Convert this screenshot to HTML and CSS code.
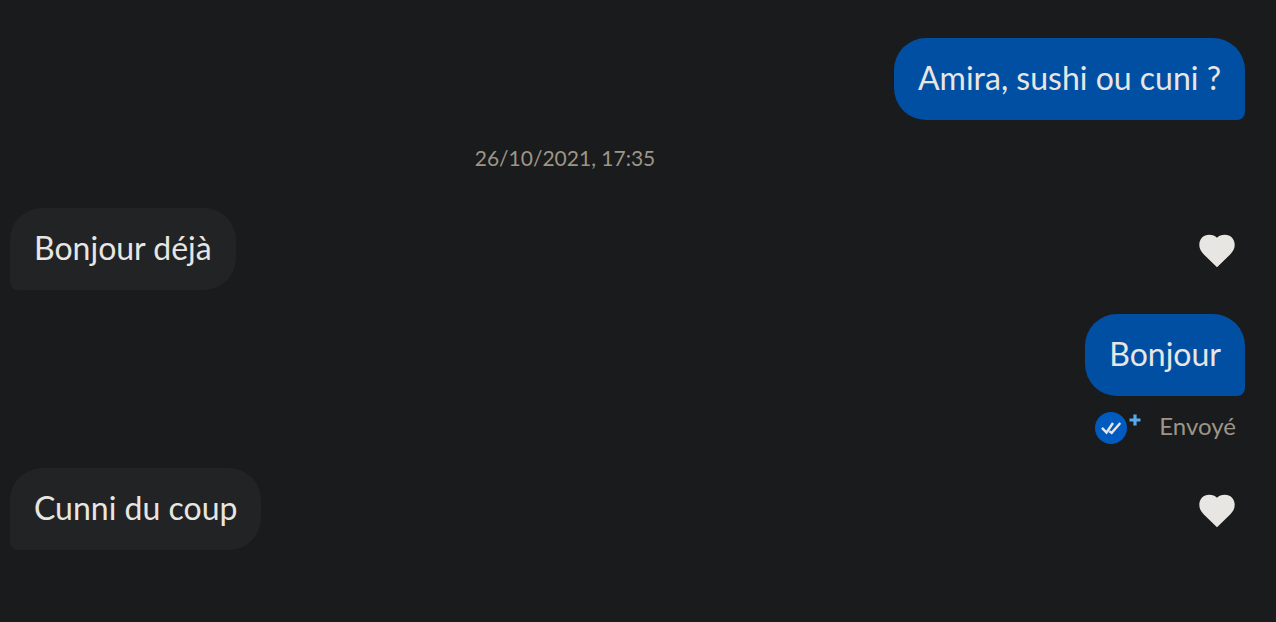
FILE: index.html
```
<!DOCTYPE html>
<html lang="fr">
<head>
<meta charset="utf-8">
<meta name="viewport" content="width=device-width, initial-scale=1">
<title>Conversation</title>
<link rel="stylesheet" href="styles.css">
</head>
<body>
<main class="chat">
  <div class="row row-sent"><p class="bubble sent">Amira, sushi ou cuni ?</p></div>
  <time class="date" datetime="2021-10-26T17:35">26/10/2021, 17:35</time>
  <div class="row">
    <p class="bubble received">Bonjour déjà</p>
    <button class="like" type="button" aria-label="J'aime"><svg class="heart" viewBox="0 0 36 34" aria-hidden="true"><path d="M18 33.200L4.600 20.200C1.500 17 .3 14.200.3 10.800C.3 4.800 4.600.8 10 .8C13.500.8 16.300 1.900 18 3.700C19.700 1.900 22.500.8 26 .8C31.400.8 35.700 4.800 35.700 10.800C35.700 14.200 34.500 17 31.400 20.200Z"/></svg></button>
  </div>
  <div class="row row-sent"><p class="bubble sent">Bonjour</p></div>
  <div class="status">
    <svg class="receipt" viewBox="0 0 48 36" aria-hidden="true"><circle cx="16" cy="20" r="16" fill="#005bc0"/><path d="M7 19.800l4.500 4.700 6.500-9.500M14.300 23.200l2.400 1.700 8.600-9.900" fill="none" stroke="#e8e6e3" stroke-width="2.400"/><path d="M40 6.500v11M34.500 12h11" stroke="#58a9ee" stroke-width="3.200"/></svg>
    <span>Envoyé</span>
  </div>
  <div class="row">
    <p class="bubble received">Cunni du coup</p>
    <button class="like" type="button" aria-label="J'aime"><svg class="heart" viewBox="0 0 36 34" aria-hidden="true"><path d="M18 33.200L4.600 20.200C1.500 17 .3 14.200.3 10.800C.3 4.800 4.600.8 10 .8C13.500.8 16.300 1.900 18 3.700C19.700 1.900 22.500.8 26 .8C31.400.8 35.700 4.800 35.700 10.800C35.700 14.200 34.500 17 31.400 20.200Z"/></svg></button>
  </div>
</main>
</body>
</html>
```
FILE: styles.css
```
* { box-sizing: border-box; }
body { margin: 0; background: #191b1c; color: #e8e6e3; font-family: Lato, sans-serif; }
.chat { display: flex; flex-direction: column; padding: 38px 31px 72px 10px; }
.row { display: flex; align-items: center; justify-content: space-between; }
.row-sent { justify-content: flex-end; }
.bubble { margin: 0; padding: 20px 24px 22px; font-size: 32px; line-height: 40px; }
.sent { background: #004fa3; border-radius: 32px 32px 8px 32px; }
.received { background: #212324; border-radius: 32px 32px 32px 8px; }
.date { align-self: center; margin: 24px 125px 36px 0; color: #9d9588; font-size: 21px; line-height: 28px; }
.like { display: flex; padding: 14px 10px 10px; border: 0; background: none; cursor: pointer; }
.heart { width: 36px; height: 34px; fill: #e8e6e3; }
.row + .row-sent { margin-top: 24px; }
.status { display: flex; justify-content: flex-end; gap: 16px; margin: 12px 9px 24px 0; color: #9d9588; font-size: 24px; line-height: 36px; }
.receipt { width: 48px; height: 36px; }
```
